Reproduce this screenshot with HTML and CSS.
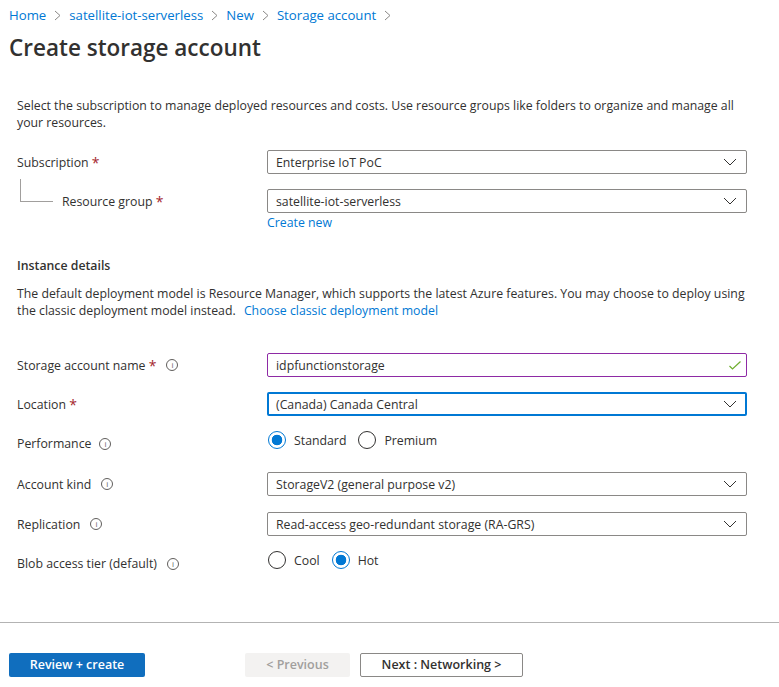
FILE: index.html
```html
<!DOCTYPE html>
<html lang="en">
<head>
    <meta charset="UTF-8">
    <title>Create storage account</title>
    <link rel="stylesheet" href="styles.css">
</head>
<body>
    <nav class="breadcrumb">
        <a href="#">Home</a><span class="crumb-sep"><svg width="7" height="11" viewBox="0 0 7 11"><path d="M1 1l5 4.5L1 10" class="sep-path"/></svg></span>
        <a href="#">satellite-iot-serverless</a><span class="crumb-sep"><svg width="7" height="11" viewBox="0 0 7 11"><path d="M1 1l5 4.5L1 10" class="sep-path"/></svg></span>
        <a href="#">New</a><span class="crumb-sep"><svg width="7" height="11" viewBox="0 0 7 11"><path d="M1 1l5 4.5L1 10" class="sep-path"/></svg></span>
        <a href="#">Storage account</a><span class="crumb-sep"><svg width="7" height="11" viewBox="0 0 7 11"><path d="M1 1l5 4.5L1 10" class="sep-path"/></svg></span>
    </nav>
    <h1>Create storage account</h1>

    <main class="content">
        <p class="intro">Select the subscription to manage deployed resources and costs. Use resource groups like folders to organize and manage all your resources.</p>

        <div class="row row-sub">
            <label>Subscription <span class="req">*</span></label>
            <div class="select">Enterprise IoT PoC<svg class="chevron" width="14" height="8" viewBox="0 0 14 8"><path d="M1 1l6 6 6-6"/></svg></div>
        </div>
        <div class="row row-group">
            <label class="nested"><span class="tree"></span>Resource group <span class="req">*</span></label>
            <div class="select">satellite-iot-serverless<svg class="chevron" width="14" height="8" viewBox="0 0 14 8"><path d="M1 1l6 6 6-6"/></svg></div>
        </div>
        <div class="row">
            <span></span>
            <a href="#" class="create-new">Create new</a>
        </div>

        <h2>Instance details</h2>
        <p class="intro model">The default deployment model is Resource Manager, which supports the latest Azure features. You may choose to deploy using the classic deployment model instead. <a href="#" class="model-link">Choose classic deployment model</a></p>

        <div class="row row-name">
            <label>Storage account name <span class="req">*</span><span class="info">i</span></label>
            <div class="select valid">idpfunctionstorage<svg class="check" width="12" height="9" viewBox="0 0 12 9"><path d="M.5 5l3 3L11.5 .5"/></svg></div>
        </div>
        <div class="row row-location">
            <label>Location <span class="req">*</span></label>
            <div class="select focused">(Canada) Canada Central<svg class="chevron" width="14" height="8" viewBox="0 0 14 8"><path d="M1 1l6 6 6-6"/></svg></div>
        </div>
        <div class="row row-radio row-perf">
            <label>Performance<span class="info info-near">i</span></label>
            <div class="radios">
                <span class="radio on"></span><span class="radio-text">Standard</span>
                <span class="radio"></span><span class="radio-text">Premium</span>
            </div>
        </div>
        <div class="row row-kind">
            <label>Account kind<span class="info">i</span></label>
            <div class="select">StorageV2 (general purpose v2)<svg class="chevron" width="14" height="8" viewBox="0 0 14 8"><path d="M1 1l6 6 6-6"/></svg></div>
        </div>
        <div class="row row-repl">
            <label>Replication<span class="info">i</span></label>
            <div class="select">Read-access geo-redundant storage (RA-GRS)<svg class="chevron" width="14" height="8" viewBox="0 0 14 8"><path d="M1 1l6 6 6-6"/></svg></div>
        </div>
        <div class="row row-radio row-tier">
            <label>Blob access tier (default)<span class="info">i</span></label>
            <div class="radios">
                <span class="radio"></span><span class="radio-text">Cool</span>
                <span class="radio on"></span><span class="radio-text">Hot</span>
            </div>
        </div>
    </main>

    <footer class="footer">
        <button class="btn primary">Review + create</button>
        <button class="btn disabled">&lt; Previous</button>
        <button class="btn outline">Next : Networking &gt;</button>
    </footer>
</body>
</html>
```

FILE: styles.css
```css
* {
    box-sizing: border-box;
}

html, body {
    margin: 0;
    height: 687px;
    overflow: hidden;
}

body {
    background-color: #ffffff;
    color: #323130;
    font-family: "Open Sans", "Noto Sans", sans-serif;
    font-size: 12.3px;
    line-height: 17px;
}

a {
    color: #0078d4;
    text-decoration: none;
}

.breadcrumb {
    display: flex;
    align-items: center;
    height: 17px;
    margin: 7px 0 0 9px;
    font-size: 13.2px;
}

.crumb-sep {
    display: flex;
    margin: 0 8px 0 8px;
}

.sep-path {
    fill: none;
    stroke: #8a8886;
}

h1 {
    margin: 10px 0 0 9px;
    font-size: 22.5px;
    line-height: 28px;
    font-weight: 600;
}

.content {
    padding: 0 32px 0 17px;
}

.intro {
    margin: 35px 0 0;
}

.row {
    display: grid;
    grid-template-columns: 250px 480px;
    align-items: center;
}

.row-radio {
    align-items: start;
}

.row-radio label {
    padding-top: 4px;
}

label {
    display: flex;
    align-items: center;
    white-space: pre;
}

.req {
    color: #a4262c;
    font-size: 14px;
}

.row-sub { margin-top: 19px; }
.row-group { margin-top: 15px; }
.row-name { margin-top: 34px; }
.row-location { margin-top: 15px; }
.row-perf { margin-top: 15px; }
.row-kind { margin-top: 20px; }
.row-repl { margin-top: 16px; }
.row-tier { margin-top: 15px; }

.select {
    display: flex;
    align-items: center;
    justify-content: space-between;
    height: 24px;
    padding: 0 9px 0 8px;
    border: 1px solid #8a8886;
    border-radius: 2px;
}

.valid {
    border-color: #8e2aa5;
    padding-right: 5px;
}

.focused {
    border: 2px solid #0078d4;
    padding-left: 7px;
    padding-right: 8px;
}

.chevron {
    fill: none;
    stroke: #323130;
}

.check {
    fill: none;
    stroke: #6fae2e;
    stroke-width: 1.2;
}

.nested {
    position: relative;
    padding-left: 45px;
}

.tree {
    position: absolute;
    left: 3px;
    top: -14px;
    width: 33px;
    height: 23px;
    border-left: 1px solid #a19f9d;
    border-bottom: 1px solid #a19f9d;
}

.create-new {
    margin-top: 1px;
}

h2 {
    margin: 26px 0 0;
    font-size: 12.3px;
    line-height: 17px;
    font-weight: 600;
}

.model {
    margin-top: 11px;
}

.model-link {
    margin-left: 5px;
}

.info {
    display: inline-flex;
    align-items: center;
    justify-content: center;
    width: 12px;
    height: 12px;
    margin-left: 10px;
    border: 1px solid #605e5c;
    border-radius: 50%;
    color: #605e5c;
    font-size: 8px;
    line-height: 1;
}

.info-near {
    margin-left: 8px;
}

.radios {
    display: flex;
    align-items: center;
    padding-left: 1px;
}

.radio {
    width: 18px;
    height: 18px;
    border: 1px solid #323130;
    border-radius: 50%;
    margin-right: 8px;
}

.radio.on {
    border-color: #0078d4;
    background: radial-gradient(circle, #0078d4 0 5px, #ffffff 5.6px);
}

.radio-text {
    margin-right: 12px;
}

.footer {
    margin-top: 50px;
    padding: 30px 0 0 9px;
    border-top: 1px solid #b3b3b3;
    display: flex;
}

.btn {
    height: 24px;
    border-radius: 2px;
    font-family: inherit;
    font-size: 12.5px;
    font-weight: 600;
    padding: 0 0 2px;
    border: 1px solid transparent;
}

.primary {
    width: 136px;
    background-color: #106ebe;
    color: #ffffff;
}

.disabled {
    width: 105px;
    margin-left: 100px;
    background-color: #f3f2f1;
    color: #a19f9d;
}

.outline {
    width: 163px;
    margin-left: 10px;
    background-color: #ffffff;
    border-color: #8a8886;
    color: #323130;
}
```
